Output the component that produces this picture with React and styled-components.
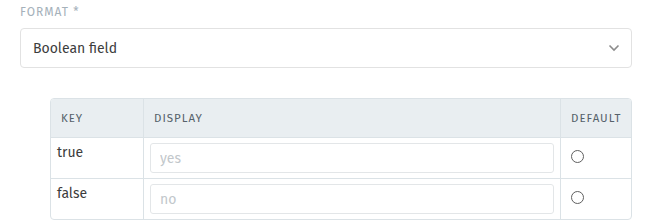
import React from "react";
import styled, { createGlobalStyle } from "styled-components";

const GlobalStyle = createGlobalStyle`
  body {
    margin: 0;
    background: #fff;
    font-family: "Fira Sans", "Open Sans", "Liberation Sans", sans-serif;
  }
`;

const Page = styled.div`
  padding: 5px 16px 0 20px;
`;

const Label = styled.div`
  font-size: 12px;
  line-height: 15px;
  letter-spacing: 1px;
  text-transform: uppercase;
  color: #a5b1ba;
  margin-bottom: 8px;
`;

const Select = styled.div`
  display: flex;
  align-items: center;
  justify-content: space-between;
  height: 38px;
  border: 1px solid #e2e2e2;
  border-radius: 4px;
  padding: 0 11px 0 12px;
  font-size: 14px;
  color: #3c3c3c;
`;

const TableWrap = styled.div`
  margin: 30px 0 0 30px;
`;

const Table = styled.table`
  width: 100%;
  border-collapse: separate;
  border-spacing: 0;
  border: 1px solid #dbe2e6;
  border-radius: 4px;
  overflow: hidden;
  table-layout: fixed;
`;

const Th = styled.th`
  background: #e9eef1;
  height: 38px;
  padding: 0 10px;
  text-align: left;
  font-weight: 400;
  font-size: 11.5px;
  letter-spacing: 1px;
  text-transform: uppercase;
  color: #56626b;
  border-bottom: 1px solid #dbe2e6;
  border-left: ${(p) => (p.$first ? "none" : "1px solid #dbe2e6")};
  width: ${(p) => p.$w};
`;

const Td = styled.td`
  height: 40px;
  padding: ${(p) => p.$pad || "0"};
  vertical-align: top;
  font-size: 14px;
  line-height: 20px;
  color: #3c3c3c;
  border-top: ${(p) => (p.$firstRow ? "none" : "1px solid #dbe2e6")};
  border-left: ${(p) => (p.$first ? "none" : "1px solid #dbe2e6")};
  box-sizing: border-box;
`;

const Input = styled.input`
  display: block;
  box-sizing: border-box;
  width: 100%;
  height: 30px;
  border: 1px solid #e3e6e8;
  border-radius: 3px;
  padding: 0 9px;
  font-family: inherit;
  font-size: 14px;
  outline: none;
  &::placeholder {
    color: #c2c7cb;
  }
`;

const Radio = styled.span`
  display: block;
  width: 11px;
  height: 11px;
  border: 1px solid #5f5f5f;
  border-radius: 50%;
  margin-top: 12px;
`;

const Chevron = () => (
  <svg width="12" height="8" viewBox="0 0 12 8">
    <path d="M1.5 1.5 L6 6 L10.5 1.5" fill="none" stroke="#8c8c8c" strokeWidth="1.6" />
  </svg>
);

const rows = [
  { key: "true", placeholder: "yes" },
  { key: "false", placeholder: "no" },
];

export default function App() {
  return (
    <Page>
      <GlobalStyle />
      <Label>Format *</Label>
      <Select>
        <span>Boolean field</span>
        <Chevron />
      </Select>
      <TableWrap>
        <Table>
          <thead>
            <tr>
              <Th $first $w="72px">Key</Th>
              <Th $w="auto">Display</Th>
              <Th $w="50px">Default</Th>
            </tr>
          </thead>
          <tbody>
            {rows.map((r, i) => (
              <tr key={r.key}>
                <Td $first $firstRow={i === 0} $pad="5px 6px">{r.key}</Td>
                <Td $firstRow={i === 0} $pad="5px 6px">
                  <Input placeholder={r.placeholder} />
                </Td>
                <Td $firstRow={i === 0} $pad="0 10px">
                  <Radio />
                </Td>
              </tr>
            ))}
          </tbody>
        </Table>
      </TableWrap>
    </Page>
  );
}
